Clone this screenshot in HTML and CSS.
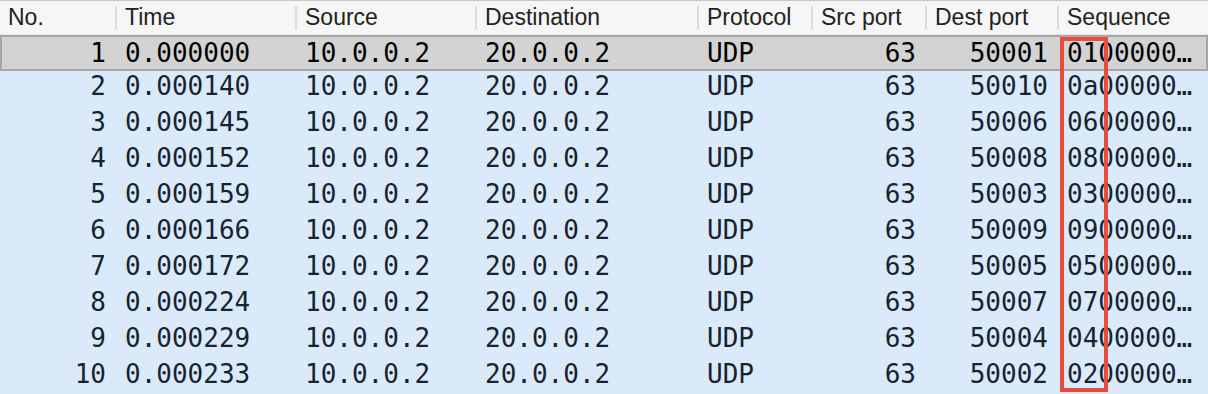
FILE: index.html
```html
<!DOCTYPE html>
<html lang="en">
<head>
  <meta charset="UTF-8" />
  <meta name="viewport" content="width=device-width, initial-scale=1.0" />
  <title>Packet list</title>
  <link rel="stylesheet" href="styles.css">
</head>
<body>
  <div class="packets">
    <div class="head">
      <div>No.</div>
      <div class="sep">Time</div>
      <div class="sep">Source</div>
      <div class="sep">Destination</div>
      <div class="sep">Protocol</div>
      <div class="sep">Src port</div>
      <div class="sep">Dest port</div>
      <div class="sep">Sequence</div>
    </div>

    <div class="row selected">
      <div class="num">1</div><div>0.000000</div><div>10.0.0.2</div><div>20.0.0.2</div><div>UDP</div><div class="num">63</div><div class="num">50001</div><div>0100000…</div>
    </div>
    <div class="row">
      <div class="num">2</div><div>0.000140</div><div>10.0.0.2</div><div>20.0.0.2</div><div>UDP</div><div class="num">63</div><div class="num">50010</div><div>0a00000…</div>
    </div>
    <div class="row">
      <div class="num">3</div><div>0.000145</div><div>10.0.0.2</div><div>20.0.0.2</div><div>UDP</div><div class="num">63</div><div class="num">50006</div><div>0600000…</div>
    </div>
    <div class="row">
      <div class="num">4</div><div>0.000152</div><div>10.0.0.2</div><div>20.0.0.2</div><div>UDP</div><div class="num">63</div><div class="num">50008</div><div>0800000…</div>
    </div>
    <div class="row">
      <div class="num">5</div><div>0.000159</div><div>10.0.0.2</div><div>20.0.0.2</div><div>UDP</div><div class="num">63</div><div class="num">50003</div><div>0300000…</div>
    </div>
    <div class="row">
      <div class="num">6</div><div>0.000166</div><div>10.0.0.2</div><div>20.0.0.2</div><div>UDP</div><div class="num">63</div><div class="num">50009</div><div>0900000…</div>
    </div>
    <div class="row">
      <div class="num">7</div><div>0.000172</div><div>10.0.0.2</div><div>20.0.0.2</div><div>UDP</div><div class="num">63</div><div class="num">50005</div><div>0500000…</div>
    </div>
    <div class="row">
      <div class="num">8</div><div>0.000224</div><div>10.0.0.2</div><div>20.0.0.2</div><div>UDP</div><div class="num">63</div><div class="num">50007</div><div>0700000…</div>
    </div>
    <div class="row">
      <div class="num">9</div><div>0.000229</div><div>10.0.0.2</div><div>20.0.0.2</div><div>UDP</div><div class="num">63</div><div class="num">50004</div><div>0400000…</div>
    </div>
    <div class="row">
      <div class="num">10</div><div>0.000233</div><div>10.0.0.2</div><div>20.0.0.2</div><div>UDP</div><div class="num">63</div><div class="num">50002</div><div>0200000…</div>
    </div>

    <!-- highlight on the first sequence byte -->
    <div class="mark"></div>
  </div>
</body>
</html>
```

FILE: styles.css
```css
body {
  margin: 0;
  background-color: #dbeafb;
  overflow: hidden;
}
.packets {
  position: relative;
  width: 1208px;
}
.head, .row {
  display: grid;
  grid-template-columns: 115px 180px 180px 222px 114px 114px 132px 151px;
}
.head {
  height: 35px;
  box-sizing: border-box;
  border-top: 1px solid #c6c6c6;
  border-bottom: 1px solid #e4e4e4;
  background-color: #f6f6f6;
  font-family: "Liberation Sans", Arial, sans-serif;
  font-size: 23px;
  line-height: 33px;
  color: #222;
}
.head div {
  padding-left: 10px;
  white-space: nowrap;
}
.head div:first-child {
  padding-left: 8px;
}
.head .sep {
  background: linear-gradient(#dcdcdc, #dcdcdc) 0 center / 2px 24px no-repeat;
}
.row {
  height: 36px;
  box-sizing: border-box;
  padding-bottom: 6px;
  font-family: "DejaVu Sans Mono", monospace;
  font-size: 26px;
  line-height: 30px;
  color: #15242e;
  background-color: #dbeafb;
}
.row div {
  padding: 0 9px 0 10px;
  white-space: nowrap;
  overflow: hidden;
}
.row .num {
  text-align: right;
}
.row.selected {
  padding-top: 3px;
  padding-bottom: 3px;
  color: #000;
  background-color: #d3d3d3;
  box-shadow: inset 0 0 0 2px #a7a7a7;
}
.mark {
  position: absolute;
  left: 1060px;
  top: 37px;
  width: 48px;
  height: 355px;
  box-sizing: border-box;
  border: 4px solid #e84c3d;
}
```
